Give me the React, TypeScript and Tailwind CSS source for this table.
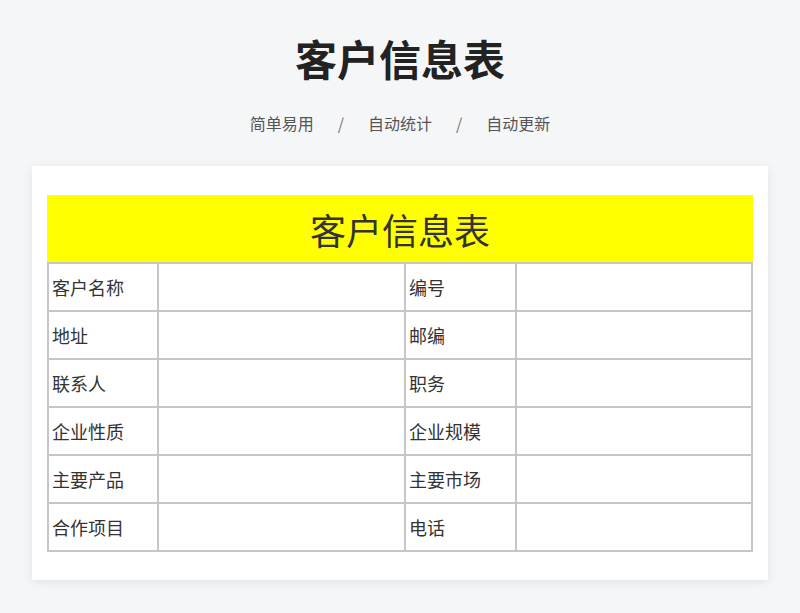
import React from 'react'

const rows = [
  ['客户名称', '编号'],
  ['地址', '邮编'],
  ['联系人', '职务'],
  ['企业性质', '企业规模'],
  ['主要产品', '主要市场'],
  ['合作项目', '电话'],
]

const font = { fontFamily: '"Noto Sans CJK SC", "Noto Sans", sans-serif' }

export default function App() {
  return (
    <div className="min-h-[613px] w-[800px] bg-[#f5f6f8] pt-[30px]" style={font}>
      {/* Header */}
      <h1 className="text-center text-[42px] font-bold leading-[56px] text-[#222]">客户信息表</h1>
      <div className="mt-[25px] flex items-center justify-center gap-[19px] text-[16px] leading-[24px] text-[#555]">
        <span>简单易用</span>
        <span className="px-[5px] text-[#777]">/</span>
        <span>自动统计</span>
        <span className="px-[5px] text-[#777]">/</span>
        <span>自动更新</span>
      </div>

      {/* Sheet card */}
      <div className="mx-[32px] mt-[31px] bg-white px-[15px] pt-[29px] pb-[28px] shadow-[0_2px_10px_rgba(0,0,0,0.08)]">
        <div className="flex h-[67px] items-center justify-center bg-[#ffff00] text-[36px] text-[#333]">
          客户信息表
        </div>
        <table className="w-full table-fixed border-collapse text-[18px] text-[#333]">
          <colgroup>
            <col className="w-[110px]" />
            <col className="w-[247px]" />
            <col className="w-[111px]" />
            <col />
          </colgroup>
          <tbody>
            {rows.map(([a, b]) => (
              <tr key={a} className="h-[48px]">
                <td className="border-2 border-[#c6c6c6] pl-[3px]">{a}</td>
                <td className="border-2 border-[#c6c6c6]" />
                <td className="border-2 border-[#c6c6c6] pl-[3px]">{b}</td>
                <td className="border-2 border-[#c6c6c6]" />
              </tr>
            ))}
          </tbody>
        </table>
      </div>
    </div>
  )
}
